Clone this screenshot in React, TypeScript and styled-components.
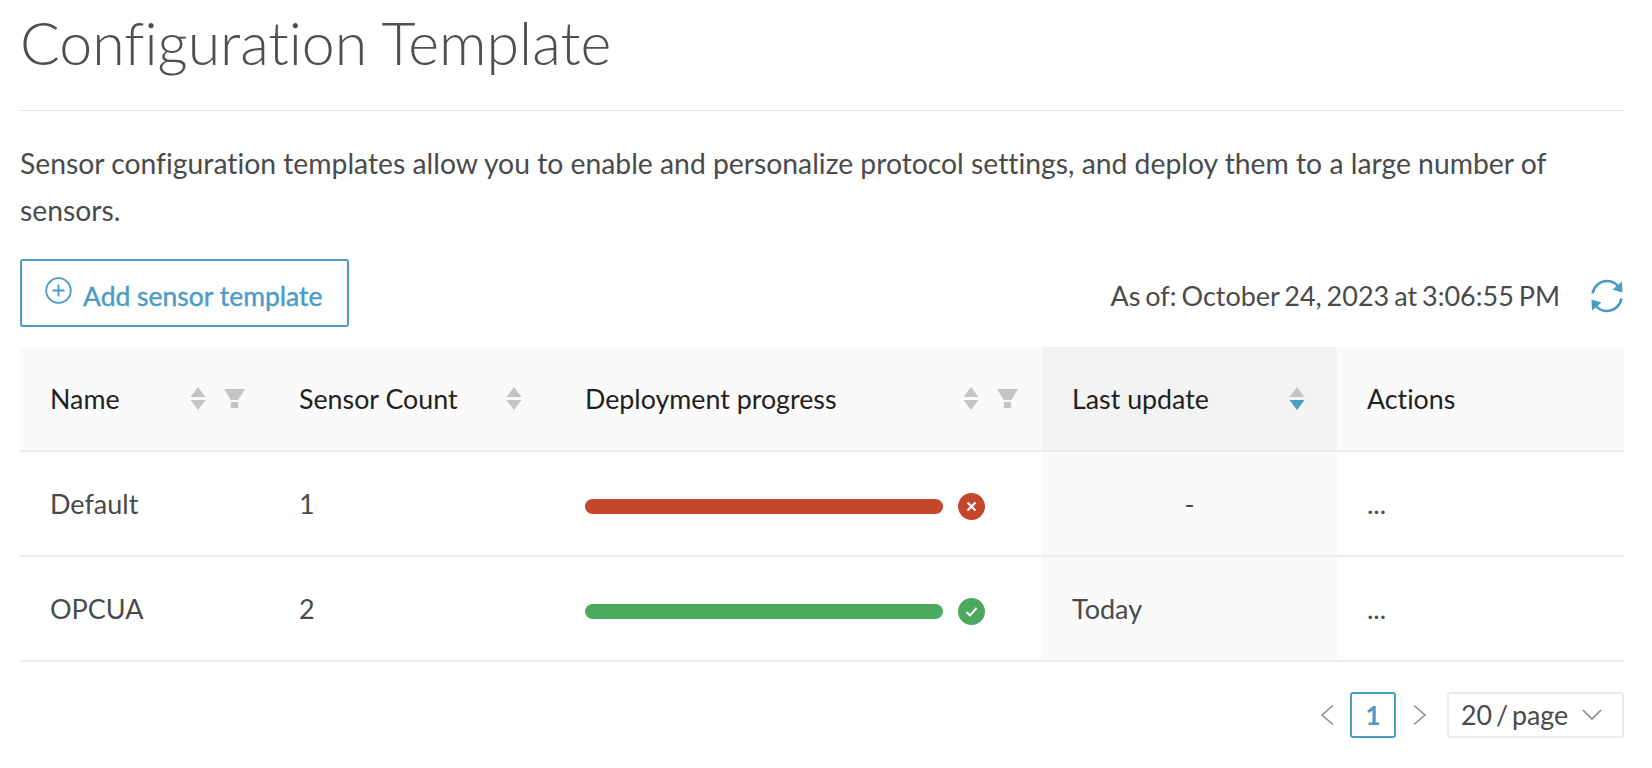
import * as React from 'react';
import styled, { createGlobalStyle } from 'styled-components';

const BLUE = '#4a9cc7';

const GlobalStyle = createGlobalStyle`
    html, body {
        margin: 0;
        padding: 0;
        background: #fff;
    }

    body {
        font-family: Lato, 'Noto Sans', sans-serif;
        font-variant-ligatures: none;
        color: #4a4a4a;
    }
`;

const SortIcon: React.FC<{ activeDown?: boolean }> = ({ activeDown }) => (
    <svg width="16" height="25" viewBox="0 0 16 25">
        <path d="M8 1 L15.5 11 H0.5 Z" fill="#c4c4c4" />
        <path d="M8 24 L15.5 14 H0.5 Z" fill={activeDown ? BLUE : '#c4c4c4'} />
    </svg>
);

const FilterIcon: React.FC = () => (
    <svg width="21" height="20" viewBox="0 0 20 20" preserveAspectRatio="none">
        <path d="M0 0 H20 L13.5 11 H6.5 Z" fill="#c4c4c4" />
        <rect x="6.5" y="13" width="7" height="6" fill="#c4c4c4" />
    </svg>
);

const PlusCircleIcon: React.FC = () => (
    <svg width="27" height="27" viewBox="0 0 27 27" fill="none" stroke={BLUE} strokeWidth="1.8">
        <circle cx="13.5" cy="13.5" r="12.3" />
        <path d="M13.5 7.5 V19.5 M7.5 13.5 H19.5" />
    </svg>
);

const RefreshIcon: React.FC = () => (
    <svg width="34" height="34" viewBox="0 0 34 34" fill="none">
        <path d="M2.5 14.5 C4 7 10 2 17 2 C22.5 2 27 4.8 29.5 9.5" stroke={BLUE} strokeWidth="2.6" />
        <path d="M32 2.5 L32.5 13.5 L22.5 10.5 Z" fill={BLUE} />
        <path d="M31.5 19.5 C30 27 24 32 17 32 C11.5 32 7 29.2 4.5 24.5" stroke={BLUE} strokeWidth="2.6" />
        <path d="M2 31.5 L1.5 20.5 L11.5 23.5 Z" fill={BLUE} />
    </svg>
);

const ErrorIcon: React.FC = () => (
    <svg width="27" height="27" viewBox="0 0 27 27">
        <circle cx="13.5" cy="13.5" r="13.5" fill="#c4472b" />
        <path d="M9.5 9.5 L17.5 17.5 M17.5 9.5 L9.5 17.5" stroke="#fff" strokeWidth="2" fill="none" />
    </svg>
);

const SuccessIcon: React.FC = () => (
    <svg width="27" height="27" viewBox="0 0 27 27">
        <circle cx="13.5" cy="13.5" r="13.5" fill="#4caa5e" />
        <path d="M8.5 14 L12 17.5 L18.5 10" stroke="#fff" strokeWidth="2" fill="none" />
    </svg>
);

const ChevronIcon: React.FC<{ direction: 'left' | 'right' | 'down' }> = ({ direction }) => {
    const paths = {
        left: 'M14 1 L3 10.5 L14 20',
        right: 'M4 1 L15 10.5 L4 20',
        down: 'M1 5 L10 14 L19 5',
    };

    return (
        <svg width={direction === 'down' ? 20 : 18} height="22" viewBox={direction === 'down' ? '0 0 20 20' : '0 0 18 21'}>
            <path d={paths[direction]} stroke="#8c8c8c" strokeWidth="1.6" fill="none" />
        </svg>
    );
};

const App: React.FC = () => (
    <Page>
        <GlobalStyle />
        <Title>Configuration Template</Title>
        <Description>
            Sensor configuration templates allow you to enable and personalize protocol settings, and deploy them to a
            large number of sensors.
        </Description>
        <Toolbar>
            <AddButton>
                <PlusCircleIcon />
                <span>Add sensor template</span>
            </AddButton>
            <Timestamp>
                <span>As of: October 24, 2023 at 3:06:55 PM</span>
                <RefreshIcon />
            </Timestamp>
        </Toolbar>
        <Table>
            <colgroup>
                <col width={249} />
                <col width={286} />
                <col width={487} />
                <col width={295} />
                <col width={287} />
            </colgroup>
            <thead>
                <tr>
                    <HeaderCell>
                        <HeaderContent>
                            <span>Name</span>
                            <HeaderIcons $offset={-6}>
                                <SortIcon />
                                <FilterIcon />
                            </HeaderIcons>
                        </HeaderContent>
                    </HeaderCell>
                    <HeaderCell>
                        <HeaderContent>
                            <span>Sensor Count</span>
                            <HeaderIcons $offset={3}>
                                <SortIcon />
                            </HeaderIcons>
                        </HeaderContent>
                    </HeaderCell>
                    <HeaderCell>
                        <HeaderContent>
                            <span>Deployment progress</span>
                            <HeaderIcons $offset={-6}>
                                <SortIcon />
                                <FilterIcon />
                            </HeaderIcons>
                        </HeaderContent>
                    </HeaderCell>
                    <HeaderCell $sorted>
                        <HeaderContent>
                            <span>Last update</span>
                            <HeaderIcons $offset={2}>
                                <SortIcon activeDown />
                            </HeaderIcons>
                        </HeaderContent>
                    </HeaderCell>
                    <HeaderCell>Actions</HeaderCell>
                </tr>
            </thead>
            <tbody>
                <tr>
                    <BodyCell>Default</BodyCell>
                    <BodyCell>1</BodyCell>
                    <BodyCell>
                        <Progress>
                            <ProgressBar $color="#c4472b" />
                            <ErrorIcon />
                        </Progress>
                    </BodyCell>
                    <BodyCell $sorted>
                        <Dash>-</Dash>
                    </BodyCell>
                    <BodyCell>...</BodyCell>
                </tr>
                <tr>
                    <BodyCell>OPCUA</BodyCell>
                    <BodyCell>2</BodyCell>
                    <BodyCell>
                        <Progress>
                            <ProgressBar $color="#4caa5e" />
                            <SuccessIcon />
                        </Progress>
                    </BodyCell>
                    <BodyCell $sorted>Today</BodyCell>
                    <BodyCell>...</BodyCell>
                </tr>
            </tbody>
        </Table>
        <Pagination>
            <ChevronIcon direction="left" />
            <PageButton>1</PageButton>
            <ChevronIcon direction="right" />
            <PageSize>
                <span>20 / page</span>
                <ChevronIcon direction="down" />
            </PageSize>
        </Pagination>
    </Page>
);

const Page = styled.div`
    box-sizing: border-box;
    width: 1652px;
    height: 768px;
    padding: 0 28px 0 20px;
    overflow: hidden;
`;

const Title = styled.h1`
    margin: 0;
    height: 111px;
    padding-top: 7px;
    box-sizing: border-box;
    border-bottom: 1px solid #e4e4e4;
    font-size: 59px;
    line-height: 72px;
    font-weight: 300;
    color: #4f4f4f;
`;

const Description = styled.p`
    margin: 29px 0 0;
    font-size: 28.3px;
    line-height: 47px;
    color: #4a4a4a;
`;

const Toolbar = styled.div`
    display: flex;
    justify-content: space-between;
    align-items: center;
    margin-top: 25px;
`;

const AddButton = styled.button`
    display: flex;
    align-items: center;
    gap: 11px;
    box-sizing: border-box;
    width: 329px;
    height: 68px;
    padding: 0 23px;
    background: #fff;
    border: 2px solid ${BLUE};
    border-radius: 3px;
    font-family: inherit;
    font-size: 26.5px;
    color: ${BLUE};
    -webkit-text-stroke: 0.4px ${BLUE};

    span {
        padding-top: 5px;
    }

    svg {
        position: relative;
        top: -3px;
    }
`;

const Timestamp = styled.div`
    display: flex;
    align-items: center;
    gap: 30px;
    padding-top: 5px;
    font-size: 27px;
    word-spacing: -2px;
    color: #4a4a4a;
`;

const Table = styled.table`
    width: 1604px;
    margin-top: 20px;
    border-collapse: collapse;
    table-layout: fixed;
`;

const HeaderCell = styled.th<{ $sorted?: boolean }>`
    box-sizing: border-box;
    height: 104px;
    padding: 0 30px;
    background: ${({ $sorted }) => ($sorted ? '#f3f3f3' : '#fafafa')};
    border-bottom: 2px solid #ececec;
    text-align: left;
    font-size: 26.8px;
    font-weight: 400;
    color: #1f1f1f;
`;

const HeaderContent = styled.div`
    display: flex;
    justify-content: space-between;
    align-items: center;
`;

const HeaderIcons = styled.div<{ $offset: number }>`
    display: flex;
    align-items: center;
    gap: 18px;
    margin-right: ${({ $offset }) => $offset}px;
`;

const BodyCell = styled.td<{ $sorted?: boolean }>`
    box-sizing: border-box;
    height: 105px;
    padding: 0 30px;
    background: ${({ $sorted }) => ($sorted ? '#fafafa' : '#fff')};
    border-bottom: 2px solid #ececec;
    font-size: 27px;
    color: #4a4a4a;
`;

const Progress = styled.div`
    display: flex;
    align-items: center;
    gap: 15px;
    padding-top: 6px;
`;

const ProgressBar = styled.div<{ $color: string }>`
    width: 358px;
    height: 15px;
    border-radius: 8px;
    background: ${({ $color }) => $color};
`;

const Dash = styled.div`
    text-align: center;
`;

const Pagination = styled.div`
    display: flex;
    justify-content: flex-end;
    align-items: center;
    margin-top: 30px;
`;

const PageButton = styled.div`
    box-sizing: border-box;
    width: 46px;
    height: 46px;
    margin: 0 14px 0 13px;
    display: flex;
    justify-content: center;
    align-items: center;
    border: 2px solid ${BLUE};
    border-radius: 3px;
    font-size: 26px;
    font-weight: 700;
    color: ${BLUE};
`;

const PageSize = styled.div`
    box-sizing: border-box;
    width: 177px;
    height: 46px;
    margin-left: 19px;
    padding: 0 20px 0 12px;
    display: flex;
    justify-content: space-between;
    align-items: center;
    border: 2px solid #ebebeb;
    border-radius: 3px;
    font-size: 26.8px;
    word-spacing: -3px;
    color: #4a4a4a;
`;

export default App;
